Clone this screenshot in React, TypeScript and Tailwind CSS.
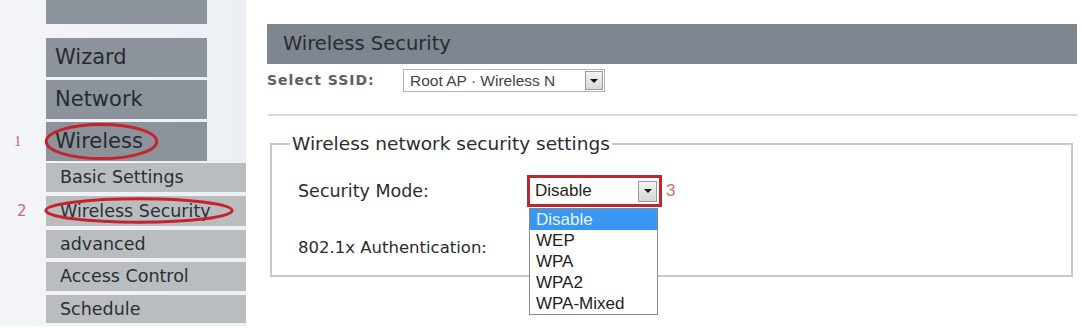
import React from 'react';

const VERDANA = "font-['DejaVu_Sans',_'Noto_Sans',_sans-serif]";
const ARIAL = "font-['Liberation_Sans',_Arial,_sans-serif]";

function Ellipse({ className }: { className: string }) {
  return (
    <svg className={`pointer-events-none absolute ${className}`} viewBox="0 0 100 40" preserveAspectRatio="none">
      <ellipse cx="50" cy="20" rx="48" ry="17.5" fill="none" stroke="#c8222c" strokeWidth="3" vectorEffect="non-scaling-stroke" />
    </svg>
  );
}

function DropArrow({ className = '' }: { className?: string }) {
  return (
    <div className={`flex items-center justify-center border border-[#9a9a9a] bg-gradient-to-b from-[#f2f2f2] to-[#d8d8d8] ${className}`}>
      <div className="h-0 w-0 border-x-[4px] border-t-[4px] border-x-transparent border-t-[#111]" />
    </div>
  );
}

const SUB_ITEMS = [
  { label: 'Basic Settings', h: 'h-[29px]', mark: '' },
  { label: 'Wireless Security', h: 'h-[30px]', mark: '2' },
  { label: 'advanced', h: 'h-[28px]', mark: '' },
  { label: 'Access Control', h: 'h-[29px]', mark: '' },
  { label: 'Schedule', h: 'h-[28px]', mark: '' },
];

const OPTIONS = ['Disable', 'WEP', 'WPA', 'WPA2', 'WPA-Mixed'];

function Sidebar() {
  return (
    <aside className={`flex h-[326px] w-[246px] shrink-0 flex-col bg-gradient-to-r from-[#f3f5f8] to-[#eceff3] ${VERDANA}`}>
      <div className="ml-[46px] h-[24px] w-[161px] bg-[#8c939a]" />
      <div className="mt-[14px] flex flex-col gap-[3px]">
        {['Wizard', 'Network', 'Wireless'].map((item) => (
          <div key={item} className="flex h-[39px] items-center">
            <span className="w-[46px] pl-[14px] text-[15px] text-[#c86a78] font-['Liberation_Serif',_serif]">
              {item === 'Wireless' ? '1' : ''}
            </span>
            <div className="relative flex h-full w-[161px] items-center bg-[#8c939a] pl-[9px] text-[21px] text-[#262b31]">
              {item}
              {item === 'Wireless' && <Ellipse className="left-[-2px] top-[0px] h-[39px] w-[115px]" />}
            </div>
          </div>
        ))}
      </div>
      <div className="mt-[2px] flex flex-col gap-[4px]">
        {SUB_ITEMS.map((s) => (
          <div key={s.label} className={`flex items-center ${s.h}`}>
            <span className="w-[46px] pl-[17px] text-[15px] text-[#c86a78]">{s.mark}</span>
            <div className="relative flex h-full w-[200px] items-center bg-[#b9bdc0] pl-[14px] text-[17.5px] text-[#2a2f35]">
              {s.label}
              {s.mark && <Ellipse className="left-[-4px] top-[1px] h-[27px] w-[194px]" />}
            </div>
          </div>
        ))}
      </div>
    </aside>
  );
}

export default function App() {
  return (
    <div className="flex h-[328px] w-[1082px] overflow-hidden bg-white">
      <Sidebar />
      <main className={`ml-[21px] flex w-[810px] flex-col pt-[24px] ${VERDANA}`}>
        <div className="flex h-[40px] items-center bg-[#7f868f] pl-[16px] text-[19.5px] text-[#272c33]">
          Wireless Security
        </div>

        <div className="mt-[5px] flex h-[23px] items-center">
          <span className="w-[136px] text-[14px] font-bold tracking-[1px] text-[#606060]">Select SSID:</span>
          <div className={`flex h-[23px] w-[202px] items-center justify-between border border-[#b4b4b4] pl-[6px] pr-[1px] text-[15.5px] text-[#444] ${ARIAL}`}>
            <span>Root AP · Wireless N</span>
            <DropArrow className="h-[19px] w-[18px]" />
          </div>
        </div>

        <div className="ml-[1px] mt-[22px] h-[2px] bg-[#d6d8da]" />

        <fieldset className="ml-[3px] mr-[4px] mt-[17px] h-[144px] border-2 border-[#c9c9c9]">
          <legend className="ml-[18px] px-[2px] text-[18.5px] leading-[22px] text-[#2c2c2c]">
            Wireless network security settings
          </legend>

          <div className="flex flex-col pl-[26px]">
            <div className="mt-[20px] flex h-[32px] items-center">
              <span className="w-[229px] text-[17.5px] text-[#2c2c2c]">Security Mode:</span>
              <div className="relative">
                <div className={`flex h-[32px] w-[135px] items-center justify-between border-[3px] border-[#c1252e] bg-white pl-[5px] pr-[2px] text-[17px] text-[#222] ${ARIAL}`}>
                  <span>Disable</span>
                  <DropArrow className="h-[21px] w-[19px]" />
                </div>
                <ul className={`absolute left-[2px] top-[33px] z-10 w-[129px] border border-[#8a8a8a] bg-white text-[17px] leading-[21px] text-[#222] ${ARIAL}`}>
                  {OPTIONS.map((o, i) => (
                    <li key={o} className={`pl-[6px] ${i === 0 ? 'bg-[#3797f3] text-[#e8f4ff]' : ''}`}>
                      {o}
                    </li>
                  ))}
                </ul>
              </div>
              <span className={`ml-[4px] text-[17px] text-[#c8727e] ${ARIAL}`}>3</span>
            </div>

            <div className="mt-[25px] flex h-[32px] items-center">
              <span className="text-[16.5px] text-[#2c2c2c]">802.1x Authentication:</span>
            </div>
          </div>
        </fieldset>
      </main>
    </div>
  );
}
